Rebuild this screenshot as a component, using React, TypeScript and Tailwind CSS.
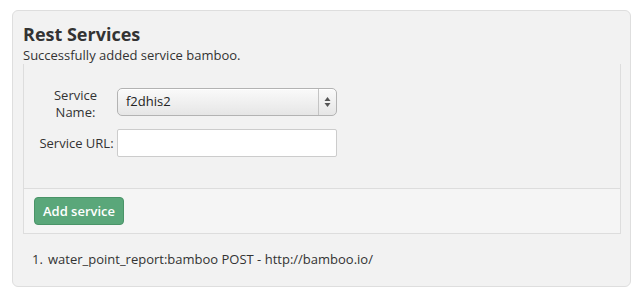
import React from 'react';

function SelectArrows() {
  return (
    <svg width="7" height="12" viewBox="0 0 7 12" className="text-[#555]">
      <path d="M3.5 1 L6.5 5 H0.5 Z" fill="currentColor" />
      <path d="M3.5 11 L6.5 7 H0.5 Z" fill="currentColor" />
    </svg>
  );
}

export default function App() {
  return (
    <div className="w-[640px] h-[296px] bg-white pt-[10px] pl-[12px] text-[#333] text-[13px]" style={{ fontFamily: '"Open Sans", "Noto Sans", sans-serif' }}>
      <div className="w-[619px] h-[277px] bg-[#f2f2f2] border border-[#dedede] rounded-[6px] pl-[10px] pr-[9px] pt-[11px]">
        <h2 className="text-[18px] font-bold leading-[24px] text-[#333]">Rest Services</h2>
        <p className="leading-[18px]">Successfully added service bamboo.</p>

        <div className="border-x border-b border-[#dddddd]">
          <div className="pt-[23px] pb-[31px] pl-[12px]">
            <div className="flex items-start">
              <label className="w-[81px] text-center leading-[17px] pr-[2px]">Service<br />Name:</label>
              <div className="mt-[1px] w-[220px] h-[28px] rounded-[5px] border border-[#b3b3b3] bg-gradient-to-b from-[#fafafa] to-[#e6e6e6] flex items-center shadow-[inset_0_1px_0_#fff]">
                <span className="pl-[8px] flex-1 text-[#222]">f2dhis2</span>
                <div className="w-[18px] h-full border-l border-[#c4c4c4] flex items-center justify-center">
                  <SelectArrows />
                </div>
              </div>
            </div>
            <div className="flex items-center mt-[8px]">
              <label className="w-[81px] text-center leading-[17px]">Service URL:</label>
              <input className="w-[220px] h-[28px] bg-white border border-[#cccccc] rounded-[2px] outline-none px-2" />
            </div>
          </div>
          <div className="border-t border-[#dddddd] bg-[#f5f5f5] py-[8px] pl-[10px]">
            <button className="w-[90px] h-[28px] rounded-[4px] bg-[#5aa77a] border border-[#4a9468] text-white font-semibold text-[13px] leading-none">
              Add service
            </button>
          </div>
        </div>

        <ol className="mt-[16px] pl-[9px] leading-[18px]">
          <li className="flex">
            <span className="w-[16px]">1.</span>
            <span>water_point_report:bamboo POST - http://bamboo.io/</span>
          </li>
        </ol>
      </div>
    </div>
  );
}
